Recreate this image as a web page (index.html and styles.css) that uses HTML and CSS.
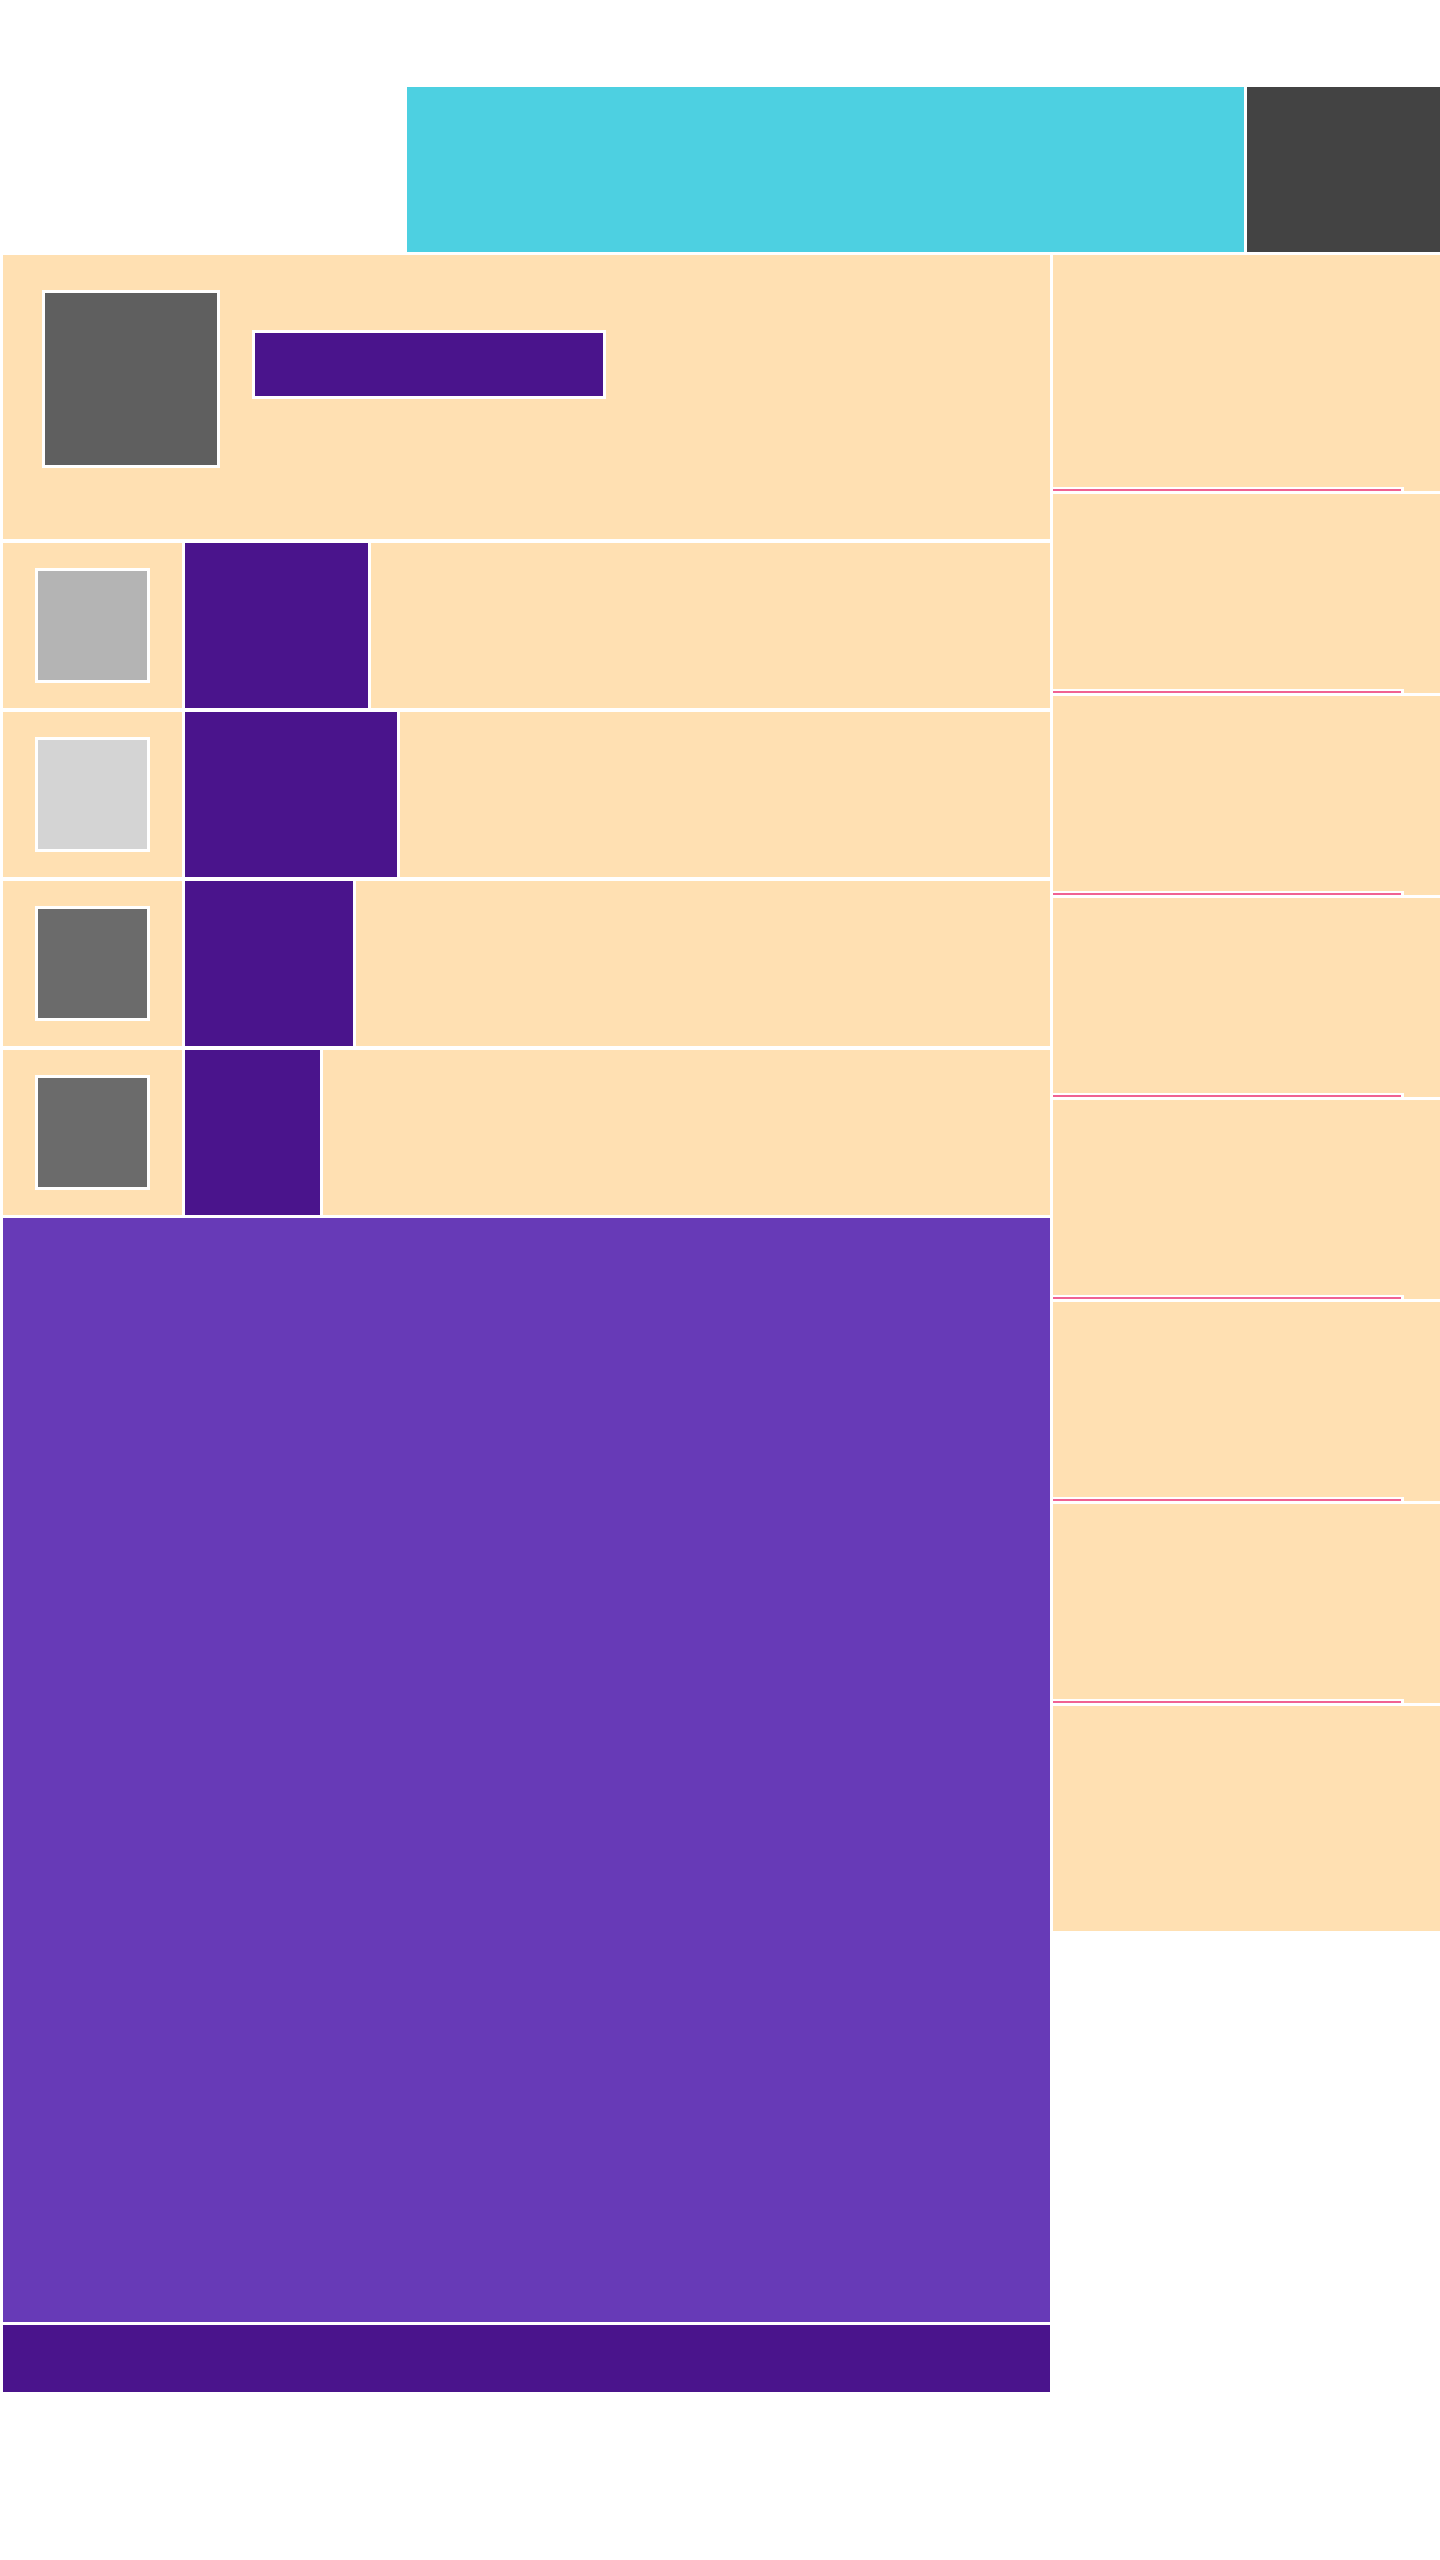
FILE: index.html
```html
<!DOCTYPE html>
<html lang="en">
<head>
    <meta charset="UTF-8">
    <meta name="viewport" content="width=device-width, initial-scale=1.0">
    <title>Layout</title>
    <link rel="stylesheet" href="styles.css">
</head>
<body>
    <header class="topbar">
        <div class="banner"></div>
        <div class="account"></div>
    </header>

    <div class="page">
        <main class="main">
            <section class="profile">
                <div class="avatar"></div>
                <div class="profile-title"></div>
            </section>

            <ul class="list">
                <li class="row">
                    <div class="thumb-cell"><div class="thumb thumb-1"></div></div>
                    <div class="label label-1"></div>
                    <div class="fill"></div>
                </li>
                <li class="row">
                    <div class="thumb-cell"><div class="thumb thumb-2"></div></div>
                    <div class="label label-2"></div>
                    <div class="fill"></div>
                </li>
                <li class="row">
                    <div class="thumb-cell"><div class="thumb thumb-3"></div></div>
                    <div class="label label-3"></div>
                    <div class="fill"></div>
                </li>
                <li class="row">
                    <div class="thumb-cell"><div class="thumb thumb-3"></div></div>
                    <div class="label label-4"></div>
                    <div class="fill"></div>
                </li>
            </ul>

            <section class="content"></section>
            <footer class="footer"></footer>
        </main>

        <aside class="sidebar">
            <div class="item item-first"><div class="divider"></div></div>
            <div class="item"><div class="divider"></div></div>
            <div class="item"><div class="divider"></div></div>
            <div class="item"><div class="divider"></div></div>
            <div class="item"><div class="divider"></div></div>
            <div class="item"><div class="divider"></div></div>
            <div class="item"><div class="divider"></div></div>
            <div class="item item-last"></div>
        </aside>
    </div>
</body>
</html>
```

FILE: styles.css
```css
* {
    box-sizing: border-box;
}
body {
    margin: 0;
    background-color: #fff;
    font-family: "Liberation Sans", Arial, sans-serif;
}
.topbar {
    display: flex;
    gap: 3px;
    padding: 87px 0 0 407px;
}
.banner {
    width: 837px;
    height: 165px;
    background-color: #4dd0e1;
}
.account {
    flex: 1;
    height: 165px;
    background-color: #434343;
}
.page {
    display: flex;
    align-items: flex-start;
    gap: 3px;
    padding: 3px 0 0 3px;
}
.main {
    width: 1047px;
    display: flex;
    flex-direction: column;
}
.profile {
    height: 284px;
    display: flex;
    align-items: flex-start;
    gap: 32px;
    padding: 35px 0 0 39px;
    background-color: #ffe0b2;
}
.avatar {
    width: 178px;
    height: 178px;
    border: 3px solid #fff;
    background-color: #5f5f5f;
}
.profile-title {
    width: 354px;
    height: 69px;
    margin-top: 40px;
    border: 3px solid #fff;
    background-color: #4a148c;
}
.list {
    list-style: none;
    margin: 4px 0 0;
    padding: 0;
    display: flex;
    flex-direction: column;
    gap: 4px;
}
.row {
    height: 165px;
    display: flex;
    gap: 3px;
}
.thumb-cell {
    width: 179px;
    display: flex;
    align-items: center;
    justify-content: center;
    background-color: #ffe0b2;
}
.thumb {
    width: 115px;
    height: 115px;
    border: 3px solid #fff;
}
.thumb-1 {
    background-color: #b4b4b4;
}
.thumb-2 {
    background-color: #d4d4d4;
}
.thumb-3 {
    background-color: #6b6b6b;
}
.label {
    background-color: #4a148c;
}
.label-1 {
    width: 183px;
}
.label-2 {
    width: 212px;
}
.label-3 {
    width: 168px;
}
.label-4 {
    width: 135px;
}
.fill {
    flex: 1;
    background-color: #ffe0b2;
}
.content {
    height: 1104px;
    margin-top: 3px;
    background-color: #673ab7;
}
.footer {
    height: 67px;
    margin-top: 3px;
    background-color: #4a148c;
}
.sidebar {
    flex: 1;
    display: flex;
    flex-direction: column;
    gap: 3px;
}
.item {
    height: 199px;
    display: flex;
    flex-direction: column;
    justify-content: flex-end;
    background-color: #ffe0b2;
}
.item-first {
    height: 236px;
}
.item-last {
    height: 225px;
}
.divider {
    width: 351px;
    height: 4px;
    padding-top: 2px;
    background-color: #fff;
}
.divider::after {
    content: "";
    display: block;
    width: 348px;
    height: 2px;
    background-color: #f06292;
}
```
